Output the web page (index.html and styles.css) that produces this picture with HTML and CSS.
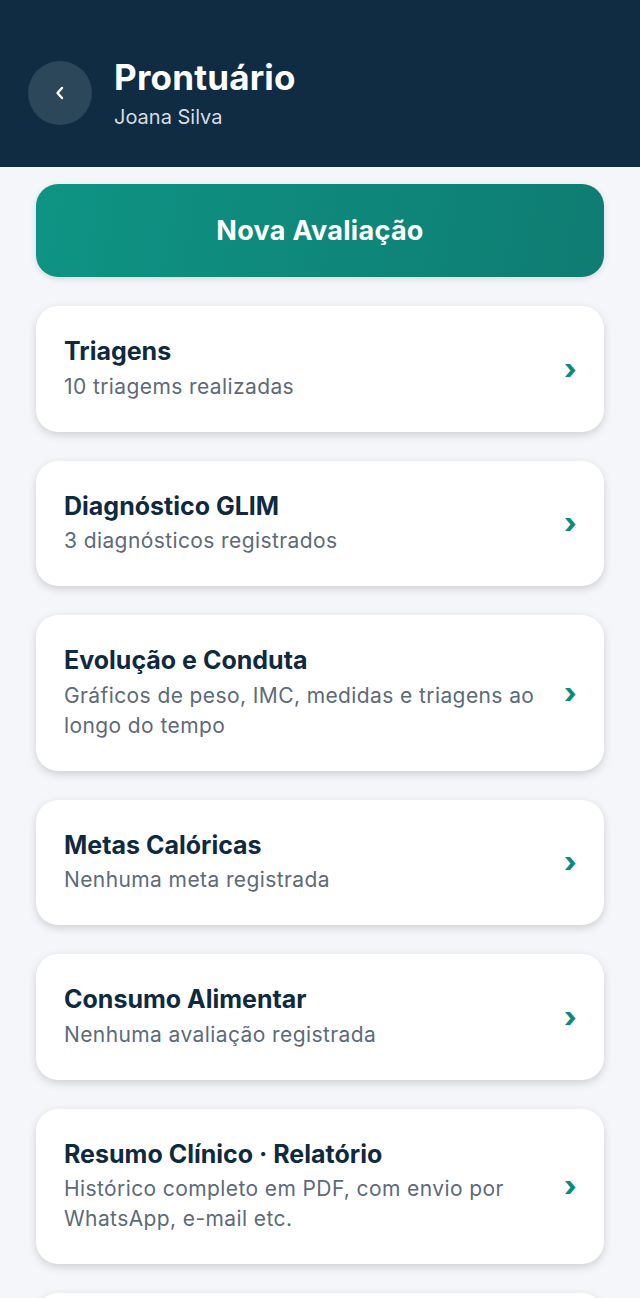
FILE: index.html
```html
<!DOCTYPE html>
<html lang="pt-BR">
<head>
  <meta charset="UTF-8">
  <meta name="viewport" content="width=device-width, initial-scale=1.0">
  <title>Prontuário</title>
  <link rel="stylesheet" href="styles.css">
</head>
<body>
  <header class="top-bar">
    <button class="back-btn" aria-label="Voltar">
      <svg width="14" height="16" viewBox="0 0 14 16"><path d="M9 3 L4.5 8 L9 13" fill="none" stroke="#fff" stroke-width="2.4" stroke-linecap="round" stroke-linejoin="round"/></svg>
    </button>
    <div class="title-block">
      <h1>Prontuário</h1>
      <p>Joana Silva</p>
    </div>
  </header>

  <main class="content">
    <button class="primary-btn">Nova Avaliação</button>

    <div class="card">
      <div class="card-text">
        <h2>Triagens</h2>
        <p>10 triagems realizadas</p>
      </div>
      <span class="chev">›</span>
    </div>

    <div class="card">
      <div class="card-text">
        <h2>Diagnóstico GLIM</h2>
        <p>3 diagnósticos registrados</p>
      </div>
      <span class="chev">›</span>
    </div>

    <div class="card">
      <div class="card-text">
        <h2>Evolução e Conduta</h2>
        <p>Gráficos de peso, IMC, medidas e triagens ao longo do tempo</p>
      </div>
      <span class="chev">›</span>
    </div>

    <div class="card">
      <div class="card-text">
        <h2>Metas Calóricas</h2>
        <p>Nenhuma meta registrada</p>
      </div>
      <span class="chev">›</span>
    </div>

    <div class="card">
      <div class="card-text">
        <h2>Consumo Alimentar</h2>
        <p>Nenhuma avaliação registrada</p>
      </div>
      <span class="chev">›</span>
    </div>

    <div class="card">
      <div class="card-text">
        <h2>Resumo Clínico · Relatório</h2>
        <p>Histórico completo em PDF, com envio por WhatsApp, e-mail etc.</p>
      </div>
      <span class="chev">›</span>
    </div>

    <div class="card">
      <div class="card-text">
        <h2>Dados do Paciente</h2>
        <p>Informações cadastrais</p>
      </div>
      <span class="chev">›</span>
    </div>
  </main>
</body>
</html>
```

FILE: styles.css
```css
body { margin: 0; font-family: Inter, "Noto Sans", sans-serif; background: #f4f6f9; color: #0f2a3f; }
.top-bar { background: #0f2c42; height: 167px; box-sizing: border-box; padding: 19px 28px 0; display: flex; align-items: center; gap: 22px; }
.back-btn { width: 64px; height: 64px; border-radius: 50%; border: none; background: #2d475a; display: flex; align-items: center; justify-content: center; padding: 0; }
.title-block h1 { margin: 0; color: #fff; font-size: 35px; font-weight: 700; line-height: 40px; letter-spacing: 0.2px; }
.title-block p { margin: 8px 0 0; color: #d5dde4; font-size: 20px; line-height: 24px; }
.content { padding: 17px 36px 40px; display: flex; flex-direction: column; gap: 29px; }
.primary-btn { height: 93px; border: none; border-radius: 22px; background: linear-gradient(100deg, #0e9484 0%, #0f7c72 100%); color: #fff; font-family: inherit; font-size: 27px; font-weight: 700; letter-spacing: 0.3px; box-shadow: 0 2px 6px rgba(0,0,0,0.12); }
.card { background: #fff; border-radius: 22px; padding: 30px 28px; display: flex; align-items: center; gap: 10px; box-shadow: 0 3px 8px rgba(0,0,0,0.16); }
.card-text { flex: 1; }
.card h2 { margin: 0; font-size: 25px; font-weight: 700; line-height: 30px; color: #0f2a3f; letter-spacing: 0; }
.card p { margin: 5.5px 0 0; font-size: 21px; line-height: 30px; color: #5d6a78; letter-spacing: 0.4px; }
.chev { width: 12px; color: #0e8a7c; font-size: 28px; font-weight: 800; line-height: 1; margin-right: 0; }
```
